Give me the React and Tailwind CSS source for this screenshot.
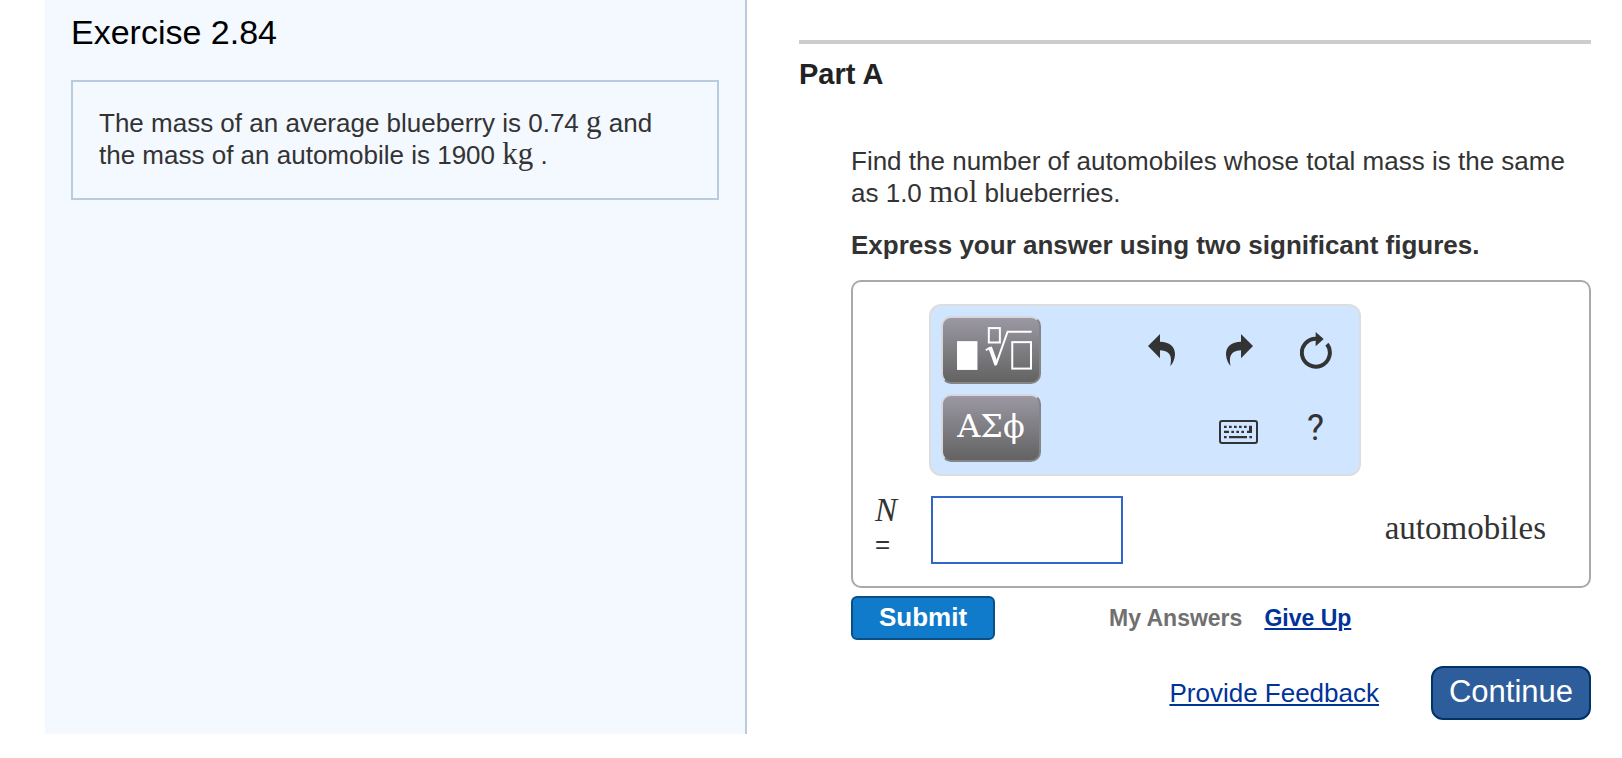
import { useState } from 'react'

function Unit({ children }) {
  return <span className="font-['Liberation_Serif',serif] text-[31px] leading-5">{children}</span>
}

function UndoIcon({ flip }) {
  return (
    <svg width="28" height="32" viewBox="0 0 84 96" aria-hidden="true">
      <path
        transform={flip ? 'translate(84 0) scale(-1 1)' : undefined}
        d="M0 36 36 0V23C64 23 82 38 81 62 80 76 75 87 67 96 72 72 70 50 36 49V73Z"
        fill="#333"
      />
    </svg>
  )
}

function ResetIcon() {
  return (
    <svg width="32" height="37" viewBox="0 0 96 111" aria-hidden="true">
      <path d="M82 38A42 42 0 1 1 48 20" fill="none" stroke="#333" strokeWidth="12" />
      <path d="M47 0 71 21 47 43ZM76 41 85 32 92 44 84 48Z" fill="#333" />
    </svg>
  )
}

function KeyboardIcon() {
  return (
    <svg width="39" height="24" viewBox="0 0 117 72" aria-hidden="true">
      <rect x="3" y="3" width="111" height="66" rx="6" fill="none" stroke="#333" strokeWidth="6" />
      <path
        d="M15 17h8v7h-8zM30 17h8v7h-8zM45 17h8v7h-8zM60 17h8v7h-8zM75 17h8v7h-8zM90 17h9v22H84v-7h6zM15 32h15v7H15zM37 32h8v7h-8zM52 32h8v7h-8zM67 32h8v7h-8zM15 48h8v7h-8zM30 48h54v7H30zM91 48h8v7h-8z"
        fill="#333"
      />
    </svg>
  )
}

function RootIcon() {
  return (
    <svg width="81" height="43" viewBox="332 174 242 128" aria-hidden="true">
      <rect x="350" y="216" width="61" height="86" fill="#fff" />
      <g fill="none" stroke="#fff" strokeWidth="6">
        <rect x="445" y="177" width="33" height="43" />
        <rect x="515" y="219" width="56" height="79" />
        <path d="M436 243 448 237" />
        <path d="M466 287 501 188H573" />
      </g>
      <path d="M443 235 454 232 468 270 467 289H462Z" fill="#fff" />
    </svg>
  )
}

function PaletteButton({ label, children }) {
  return (
    <button
      type="button"
      aria-label={label}
      className="flex h-[68px] w-[100px] items-center justify-center rounded-[10px] border-2 border-t-[#d8d8dc] border-r-[#858585] border-b-[#858585] border-l-[#d8d8dc] bg-linear-to-b from-[#9b98a3] to-[#636363] pb-1 font-['DejaVu_Serif',serif] text-[32px] leading-none text-white"
    >
      {children}
    </button>
  )
}

function ToolButton({ label, children }) {
  return (
    <button
      type="button"
      aria-label={label}
      className="flex h-[68px] items-center justify-center font-[Roboto,sans-serif] text-[36px] leading-none text-[#333]"
    >
      {children}
    </button>
  )
}

function Toolbar() {
  return (
    <div className="ml-[76px] flex w-[432px] justify-between rounded-xl border-2 border-[#ddd] bg-[#d0e5ff] pt-[10px] pr-[5px] pb-3 pl-[10px]">
      <div className="flex flex-col gap-[10px]">
        <PaletteButton label="Templates">
          <RootIcon />
        </PaletteButton>
        <PaletteButton label="Greek symbols">ΑΣϕ</PaletteButton>
      </div>
      <div className="grid grid-cols-[77px_77px_77px] gap-y-[10px] self-start">
        <ToolButton label="Undo">
          <UndoIcon />
        </ToolButton>
        <ToolButton label="Redo">
          <UndoIcon flip />
        </ToolButton>
        <ToolButton label="Reset">
          <ResetIcon />
        </ToolButton>
        <div className="col-start-2 grid h-[68px] items-center pt-1">
          <ToolButton label="Keyboard shortcuts">
            <KeyboardIcon />
          </ToolButton>
        </div>
        <ToolButton label="Help">?</ToolButton>
      </div>
    </div>
  )
}

export default function App() {
  const [answer, setAnswer] = useState('')

  return (
    <div className="grid grid-cols-[702fr_844fr] pr-[31px] pl-[45px] font-['Liberation_Sans',Arial,sans-serif] text-[26px] leading-8 text-[#333]">
      <aside className="border-r-2 border-[#b9ccdf] bg-[#f4f8ff] px-[26px] pt-3">
        <h1 className="text-[34px] leading-10 text-black">Exercise 2.84</h1>
        <p className="mt-7 border-2 border-[#b9ccdf] px-[26px] pt-[25px] pb-[27px]">
          The mass of an average blueberry is 0.74 <Unit>g</Unit> and the mass of an automobile is
          1900 <Unit>kg</Unit> .
        </p>
      </aside>

      <main className="pt-10 pb-[14px] pl-[52px]">
        <h2 className="border-t-4 border-[#ccc] pt-[14px] text-[29px] leading-8 font-bold text-[#222]">
          Part A
        </h2>

        <form className="mt-[55px] pl-[52px]" onSubmit={(e) => e.preventDefault()}>
          <p>
            Find the number of automobiles whose total mass is the same as 1.0 <Unit>mol</Unit>{' '}
            blueberries.
          </p>
          <p className="mt-5 font-bold">Express your answer using two significant figures.</p>

          <div className="mt-[19px] rounded-[10px] border-2 border-[#a9a9a9] py-[22px]">
            <Toolbar />
            <div className="mt-5 flex items-center pr-[43px] pl-[22px]">
              <label htmlFor="answer" className="w-14 pb-1">
                <i className="font-['Liberation_Serif',serif] text-[33px] leading-5">N</i>
                <br />=
              </label>
              <input
                id="answer"
                type="text"
                className="h-[68px] w-[192px] border-2 border-[#36c] bg-white px-3 outline-none"
                value={answer}
                onChange={(e) => setAnswer(e.target.value)}
              />
              <span className="ml-auto pb-1 font-['Liberation_Serif',serif] text-[33px]">
                automobiles
              </span>
            </div>
          </div>

          <div className="mt-2 flex items-center">
            <button
              type="submit"
              className="h-11 w-36 rounded-md border-2 border-[#0a4f86] bg-[#107acb] pb-0.5 font-bold text-white"
            >
              Submit
            </button>
            <div className="ml-[114px] flex gap-[22px] text-[23px] font-bold">
              <span className="text-[#707070]">My Answers</span>
              <a href="#give-up" className="text-[#039] underline">
                Give Up
              </a>
            </div>
          </div>
        </form>

        <div className="mt-[26px] flex items-center justify-end gap-[52px]">
          <a href="#feedback" className="text-[#039] underline">
            Provide Feedback
          </a>
          <button
            type="button"
            className="h-[54px] w-40 rounded-xl border-2 border-[#036] bg-[#2d5d9b] pb-0.5 text-[31px] text-white"
          >
            Continue
          </button>
        </div>
      </main>
    </div>
  )
}
